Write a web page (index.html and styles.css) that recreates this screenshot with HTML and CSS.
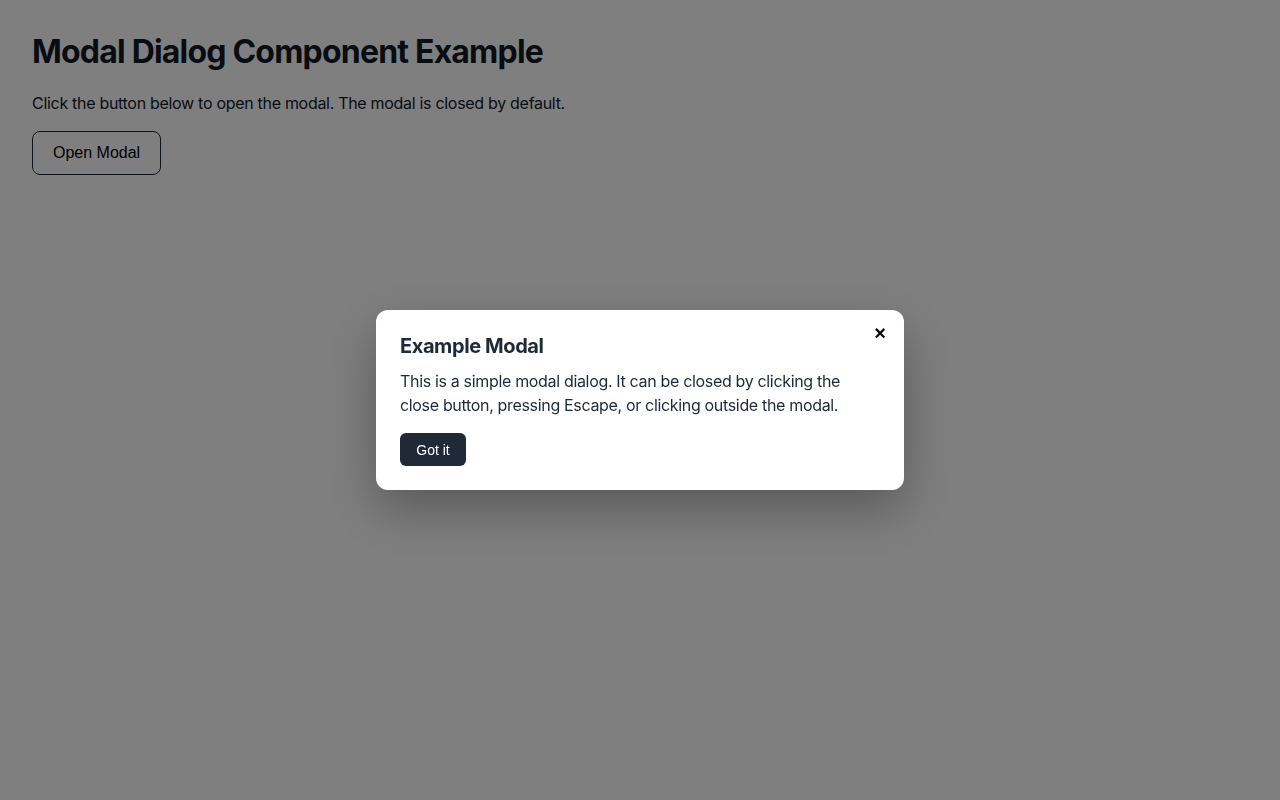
FILE: index.html
```html
<!DOCTYPE html>
<html>
<head>
	<title>Modal Dialog Component Example</title>
	<meta charset="utf-8">
	<link rel="stylesheet" href="styles.css">
</head>
<body>
	<div class="page">
		<h1>Modal Dialog Component Example</h1>
		<p>Click the button below to open the modal. The modal is closed by default.</p>
		<button type="button" class="open-btn">Open Modal</button>
	</div>

	<div class="overlay">
		<div class="modal" role="dialog" aria-modal="true" aria-labelledby="modal-title">
			<button type="button" class="close-btn" aria-label="Close">&times;</button>
			<h2 id="modal-title">Example Modal</h2>
			<p>This is a simple modal dialog. It can be closed by clicking the close button, pressing Escape, or clicking outside the modal.</p>
			<button type="button" class="ok-btn">Got it</button>
		</div>
	</div>
</body>
</html>
```

FILE: styles.css
```css
body {
	margin: 0;
	background: #ffffff;
	font-family: Inter, "Noto Sans", sans-serif;
	color: #111827;
}
.page {
	padding: 32px;
}
.page h1 {
	margin: 0 0 19px;
	font-size: 32px;
	line-height: 40px;
	font-weight: 700;
	letter-spacing: -0.8px;
}
.page p {
	margin: 0 0 16px;
	font-size: 16px;
	line-height: 24px;
	letter-spacing: -0.3px;
}
.open-btn {
	font-family: "Liberation Sans", Arial, sans-serif;
	font-size: 16px;
	padding: 12px 20px;
	background: #ffffff;
	color: #000000;
	border: 1px solid #1f2937;
	border-radius: 8px;
	height: 44px;
	cursor: pointer;
}
.overlay {
	position: fixed;
	inset: 0;
	background: rgba(0, 0, 0, 0.5);
	display: flex;
	align-items: center;
	justify-content: center;
}
.modal {
	position: relative;
	width: 480px;
	padding: 24px;
	background: #ffffff;
	border-radius: 12px;
	box-shadow: 0 20px 50px rgba(0, 0, 0, 0.3);
	color: #1f2937;
}
.modal h2 {
	margin: 0 0 11px;
	font-size: 20px;
	line-height: 24px;
	font-weight: 700;
	letter-spacing: -0.4px;
}
.modal p {
	margin: 0 0 16px;
	font-size: 16px;
	line-height: 24px;
	letter-spacing: -0.33px;
}
.ok-btn {
	font-family: "Liberation Sans", Arial, sans-serif;
	font-size: 14px;
	height: 33px;
	width: 66px;
	padding: 0;
	background: #1f2937;
	color: #ffffff;
	border: 0;
	border-radius: 6px;
	cursor: pointer;
}
.close-btn {
	position: absolute;
	top: 13px;
	right: 14px;
	width: 20px;
	height: 20px;
	padding: 0;
	background: none;
	border: 0;
	font-family: "Liberation Sans", Arial, sans-serif;
	font-size: 20px;
	font-weight: 700;
	line-height: 20px;
	color: #000000;
	cursor: pointer;
}
```
